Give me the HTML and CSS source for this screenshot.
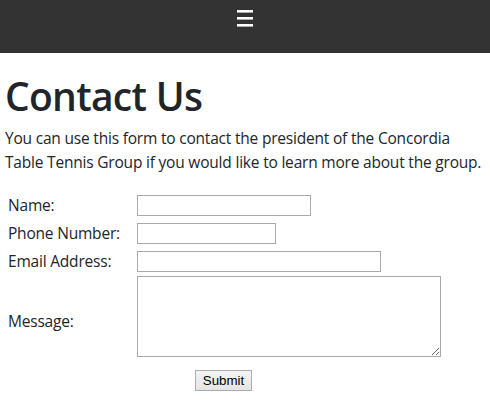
FILE: index.html
```html
<!DOCTYPE html>
<html lang="en">
<head>
<meta charset="utf-8">
<title>Contact Us</title>
<link rel="stylesheet" href="styles.css">
</head>
<body>
<header class="topbar">
  <a class="menu-toggle" href="#" aria-label="Menu">
    <svg width="16" height="17" viewBox="0 0 16 17" aria-hidden="true">
      <rect x="0" y="0" width="16" height="2.6" fill="#fff"/>
      <rect x="0" y="7" width="16" height="2.6" fill="#fff"/>
      <rect x="0" y="14" width="16" height="2.6" fill="#fff"/>
    </svg>
  </a>
</header>
<main class="content">
  <h1 class="title">Contact Us</h1>
  <p class="intro">You can use this form to contact the president of the Concordia Table Tennis Group if you would like to learn more about the group.</p>
  <form class="contact-form">
    <label class="field-label" for="name">Name:</label>
    <div class="field"><input class="input input-name" id="name" type="text"></div>
    <label class="field-label" for="phone">Phone Number:</label>
    <div class="field"><input class="input input-phone" id="phone" type="text"></div>
    <label class="field-label" for="email">Email Address:</label>
    <div class="field"><input class="input input-email" id="email" type="text"></div>
    <label class="field-label label-message" for="message">Message:</label>
    <div class="field field-message"><textarea class="input input-message" id="message"></textarea></div>
    <div class="actions"><button class="submit" type="submit">Submit</button></div>
  </form>
</main>
</body>
</html>
```
FILE: styles.css
```css
html, body {
  margin: 0;
  padding: 0;
}
body {
  font-family: "Open Sans", "Noto Sans", sans-serif;
  color: #212529;
  background: #fff;
  font-size: 15.5px;
  line-height: 24px;
}
.topbar {
  height: 53px;
  background: #333333;
  display: flex;
  justify-content: center;
  align-items: flex-start;
}
.menu-toggle {
  display: block;
  margin-top: 10px;
  line-height: 0;
}
.content {
  padding: 0 5px;
}
.title {
  font-size: 39px;
  font-weight: 600;
  letter-spacing: -0.7px;
  line-height: 48px;
  margin: 19px 0 6px;
}
.intro {
  margin: 0 0 21px;
  letter-spacing: -0.2px;
}
.contact-form {
  display: grid;
  grid-template-columns: 129px 304px;
  width: max-content;
  align-items: center;
  row-gap: 7px;
  padding-left: 3px;
}
.field-label {
  letter-spacing: -0.2px;
  line-height: 21px;
}
.field {
  display: flex;
}
.field-message {
  margin-top: -3px;
}
.input {
  box-sizing: border-box;
  border: 1px solid #a9a9a9;
  margin: 0;
  padding: 1px 2px;
  height: 21px;
  font: 13px Arial, sans-serif;
}
.input-name { width: 174px; }
.input-phone { width: 139px; }
.input-email { width: 244px; }
.input-message {
  width: 304px;
  height: 81px;
  resize: both;
}
.label-message {
  margin-top: 6px;
}
.actions {
  grid-column: 1 / span 2;
  display: flex;
  justify-content: center;
  padding-right: 2px;
}
.submit {
  box-sizing: border-box;
  width: 57px;
  height: 21px;
  font: 13.33px Arial, sans-serif;
  color: #000;
  background: linear-gradient(#f4f4f4, #e4e4e4);
  border: 1px solid #adadad;
  border-radius: 0;
  padding: 0;
  margin-top: 6px;
}
```
